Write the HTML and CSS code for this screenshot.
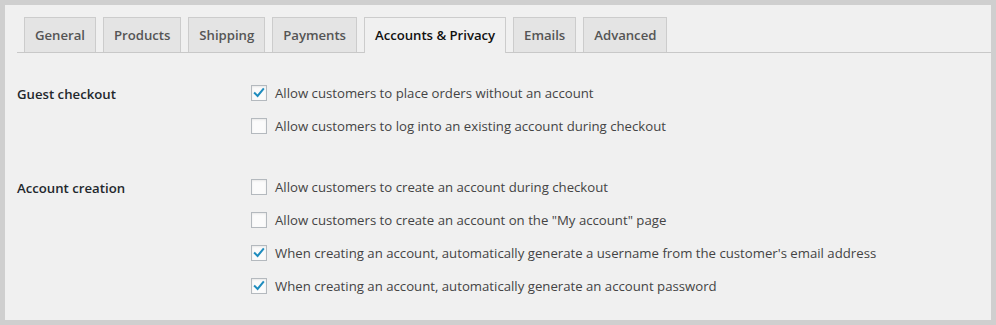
FILE: index.html
```html
<!DOCTYPE html>
<html lang="en">
<head>
<meta charset="utf-8">
<title>Accounts &amp; Privacy</title>
<link rel="stylesheet" href="styles.css">
</head>
<body>
<div class="frame">
  <div class="panel">
    <nav class="tabs">
      <a class="tab">General</a>
      <a class="tab">Products</a>
      <a class="tab">Shipping</a>
      <a class="tab">Payments</a>
      <a class="tab active">Accounts &amp; Privacy</a>
      <a class="tab">Emails</a>
      <a class="tab">Advanced</a>
    </nav>
    <div class="settings">
      <div class="section first">
        <div class="heading">Guest checkout</div>
        <div class="options">
          <label class="option"><span class="box checked"><svg viewBox="0 0 16 16"><polyline points="3.2,8.2 6.4,11.4 12.8,3.6"/></svg></span>Allow customers to place orders without an account</label>
          <label class="option"><span class="box"></span>Allow customers to log into an existing account during checkout</label>
        </div>
      </div>
      <div class="section second">
        <div class="heading">Account creation</div>
        <div class="options">
          <label class="option"><span class="box"></span>Allow customers to create an account during checkout</label>
          <label class="option"><span class="box"></span>Allow customers to create an account on the "My account" page</label>
          <label class="option"><span class="box checked"><svg viewBox="0 0 16 16"><polyline points="3.2,8.2 6.4,11.4 12.8,3.6"/></svg></span>When creating an account, automatically generate a username from the customer's email address</label>
          <label class="option"><span class="box checked"><svg viewBox="0 0 16 16"><polyline points="3.2,8.2 6.4,11.4 12.8,3.6"/></svg></span>When creating an account, automatically generate an account password</label>
        </div>
      </div>
    </div>
  </div>
</div>
</body>
</html>
```
FILE: styles.css
```css
html, body {
  margin: 0;
  padding: 0;
}
body {
  background: #cfcfcf;
  font-family: "Open Sans", "Noto Sans", "Liberation Sans", sans-serif;
  -webkit-font-smoothing: antialiased;
}
.frame {
  width: 996px;
  height: 325px;
  padding: 5px;
  box-sizing: border-box;
}
.panel {
  background: #f0f0f0;
  height: 315px;
  padding: 12px 0 0 12px;
  box-sizing: border-box;
}
.tabs {
  display: flex;
  border-bottom: 1px solid #c8c8c8;
  height: 35px;
  align-items: flex-end;
}
.tab {
  display: block;
  margin-left: 7px;
  height: 34px;
  padding: 0 10px;
  border: 1px solid #cccccc;
  border-bottom: none;
  background: #e4e4e4;
  color: #555;
  font-size: 13.2px;
  font-weight: 600;
  line-height: 34px;
  letter-spacing: -0.03px;
  white-space: nowrap;
  margin-bottom: 0;
}
.tab.active {
  background: #f0f0f0;
  color: #111;
  height: 35px;
  margin-bottom: -1px;
}
.settings {
  display: flex;
  flex-direction: column;
}
.section {
  display: grid;
  grid-template-columns: 234px 1fr;
}
.section.first {
  margin-top: 32px;
}
.section.second {
  margin-top: 45px;
}
.heading {
  font-size: 13.2px;
  font-weight: 600;
  color: #23282d;
  line-height: 17px;
  padding-top: 1px;
}
.options {
  display: flex;
  flex-direction: column;
  gap: 17px;
}
.option {
  display: flex;
  align-items: center;
  height: 16px;
  font-size: 13.2px;
  line-height: 16px;
  color: #444;
  white-space: nowrap;
}
.box {
  width: 16px;
  height: 16px;
  box-sizing: border-box;
  border: 1px solid #b4b9be;
  background: #fbfbfb;
  box-shadow: inset 0 1px 2px rgba(0, 0, 0, 0.08);
  margin-right: 8px;
  flex: none;
  display: flex;
}
.box svg {
  width: 14px;
  height: 14px;
}
.box svg polyline {
  fill: none;
  stroke: #1e8cbe;
  stroke-width: 2.3;
  stroke-linecap: square;
  stroke-linejoin: miter;
}
```
